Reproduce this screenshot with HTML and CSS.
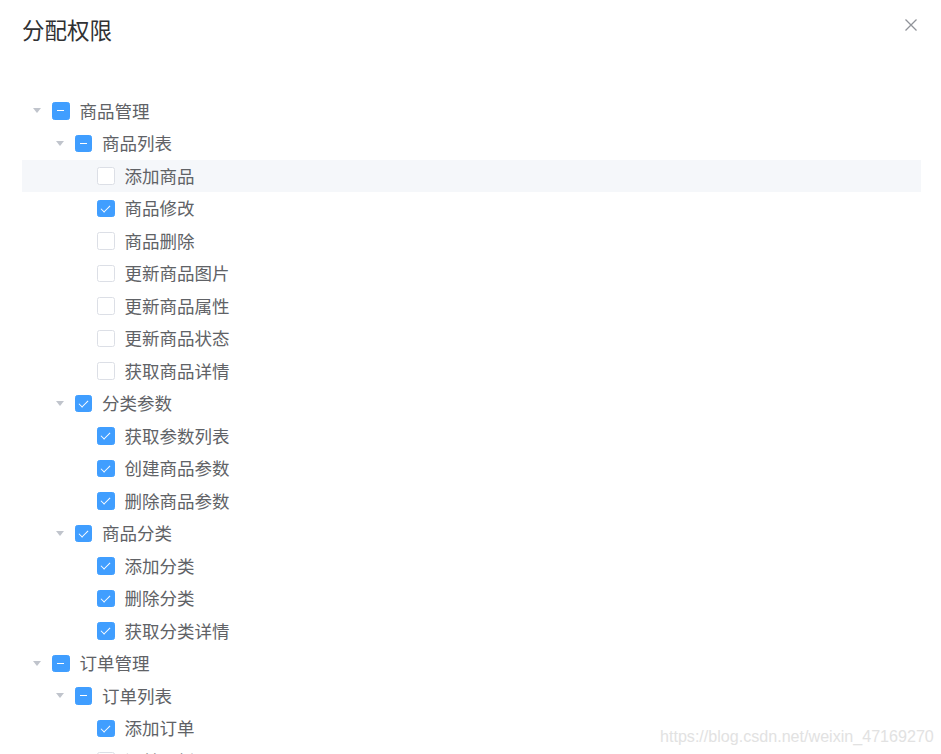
FILE: index.html
```html
<!DOCTYPE html>
<html lang="zh-CN">
<head>
<meta charset="utf-8">
<title>分配权限</title>
<link rel="stylesheet" href="styles.css">
</head>
<body>
<div class="dialog">
  <div class="header">
    <span class="title">分配权限</span>
    <button class="close" aria-label="Close">
      <svg width="12" height="12" viewBox="0 0 12 12"><path d="M0.5 0.5L11.5 11.5M11.5 0.5L0.5 11.5" stroke="#909399" stroke-width="1.3" fill="none"/></svg>
    </button>
  </div>
  <div class="tree">
    <div class="node l1"><span class="caret"></span><span class="cb ind"></span><span class="label">商品管理</span></div>
    <div class="node l2"><span class="caret"></span><span class="cb ind"></span><span class="label">商品列表</span></div>
    <div class="node l3 hover"><span class="caret leaf"></span><span class="cb"></span><span class="label">添加商品</span></div>
    <div class="node l3"><span class="caret leaf"></span><span class="cb chk"></span><span class="label">商品修改</span></div>
    <div class="node l3"><span class="caret leaf"></span><span class="cb"></span><span class="label">商品删除</span></div>
    <div class="node l3"><span class="caret leaf"></span><span class="cb"></span><span class="label">更新商品图片</span></div>
    <div class="node l3"><span class="caret leaf"></span><span class="cb"></span><span class="label">更新商品属性</span></div>
    <div class="node l3"><span class="caret leaf"></span><span class="cb"></span><span class="label">更新商品状态</span></div>
    <div class="node l3"><span class="caret leaf"></span><span class="cb"></span><span class="label">获取商品详情</span></div>
    <div class="node l2"><span class="caret"></span><span class="cb chk"></span><span class="label">分类参数</span></div>
    <div class="node l3"><span class="caret leaf"></span><span class="cb chk"></span><span class="label">获取参数列表</span></div>
    <div class="node l3"><span class="caret leaf"></span><span class="cb chk"></span><span class="label">创建商品参数</span></div>
    <div class="node l3"><span class="caret leaf"></span><span class="cb chk"></span><span class="label">删除商品参数</span></div>
    <div class="node l2"><span class="caret"></span><span class="cb chk"></span><span class="label">商品分类</span></div>
    <div class="node l3"><span class="caret leaf"></span><span class="cb chk"></span><span class="label">添加分类</span></div>
    <div class="node l3"><span class="caret leaf"></span><span class="cb chk"></span><span class="label">删除分类</span></div>
    <div class="node l3"><span class="caret leaf"></span><span class="cb chk"></span><span class="label">获取分类详情</span></div>
    <div class="node l1"><span class="caret"></span><span class="cb ind"></span><span class="label">订单管理</span></div>
    <div class="node l2"><span class="caret"></span><span class="cb ind"></span><span class="label">订单列表</span></div>
    <div class="node l3"><span class="caret leaf"></span><span class="cb chk"></span><span class="label">添加订单</span></div>
    <div class="node l3"><span class="caret leaf"></span><span class="cb"></span><span class="label">订单更新</span></div>
    <div class="node l3"><span class="caret leaf"></span><span class="cb"></span><span class="label">获取订单详情</span></div>
  </div>
  <div class="watermark">https://blog.csdn.net/weixin_47169270</div>
</div>
</body>
</html>
```

FILE: styles.css
```css
html, body {
  margin: 0;
  padding: 0;
  height: 754px;
  overflow: hidden;
  background: #fff;
}
body {
  font-family: "Noto Sans CJK SC", "Noto Sans", sans-serif;
}
.dialog {
  position: relative;
  height: 754px;
  overflow: hidden;
}
.header {
  display: flex;
  align-items: flex-start;
  justify-content: space-between;
  padding: 14px 20px 0 22px;
  height: 94.5px;
  box-sizing: border-box;
}
.title {
  font-size: 22.5px;
  line-height: 30px;
  color: #303133;
}
.close {
  border: 0;
  background: none;
  padding: 0;
  margin-top: 4px;
  margin-right: 3px;
  width: 14px;
  height: 14px;
  display: flex;
  align-items: center;
  justify-content: center;
}
.tree {
  margin: 0 20px 0 22px;
}
.node {
  display: flex;
  align-items: center;
  height: 32.5px;
  font-size: 17.5px;
  color: #606266;
}
.node.hover { background: #F5F7FA; }
.l1 { padding-left: 0; }
.l2 { padding-left: 22.5px; }
.l3 { padding-left: 45px; }
.caret {
  width: 30px;
  height: 32.5px;
  display: flex;
  align-items: center;
  justify-content: center;
  flex: none;
}
.caret::before {
  content: "";
  width: 0;
  height: 0;
  border-left: 4.5px solid transparent;
  border-right: 4.5px solid transparent;
  border-top: 5.5px solid #C0C4CC;
}
.caret.leaf::before { border-top-color: transparent; }
.cb {
  position: relative;
  flex: none;
  width: 17.5px;
  height: 17.5px;
  box-sizing: border-box;
  border: 1px solid #DCDFE6;
  border-radius: 2.5px;
  background: #fff;
  margin-right: 10px;
}
.cb.chk, .cb.ind {
  background: #409EFF;
  border-color: #409EFF;
}
.cb.ind::before {
  content: "";
  position: absolute;
  left: 4.2px;
  right: 4.2px;
  top: 7.1px;
  height: 1.4px;
  background: #fff;
}
.cb.chk::after {
  content: "";
  position: absolute;
  box-sizing: content-box;
  left: 5.4px;
  top: 2px;
  width: 3.6px;
  height: 8.2px;
  border: 1.3px solid #fff;
  border-left: 0;
  border-top: 0;
  transform: rotate(45deg);
}
.label {
  white-space: nowrap;
  line-height: 32.5px;
}
.watermark {
  position: absolute;
  left: 660px;
  top: 727px;
  font-family: "Liberation Sans", Arial, sans-serif;
  font-size: 16.1px;
  color: #e2e2e2;
  white-space: nowrap;
}
```
